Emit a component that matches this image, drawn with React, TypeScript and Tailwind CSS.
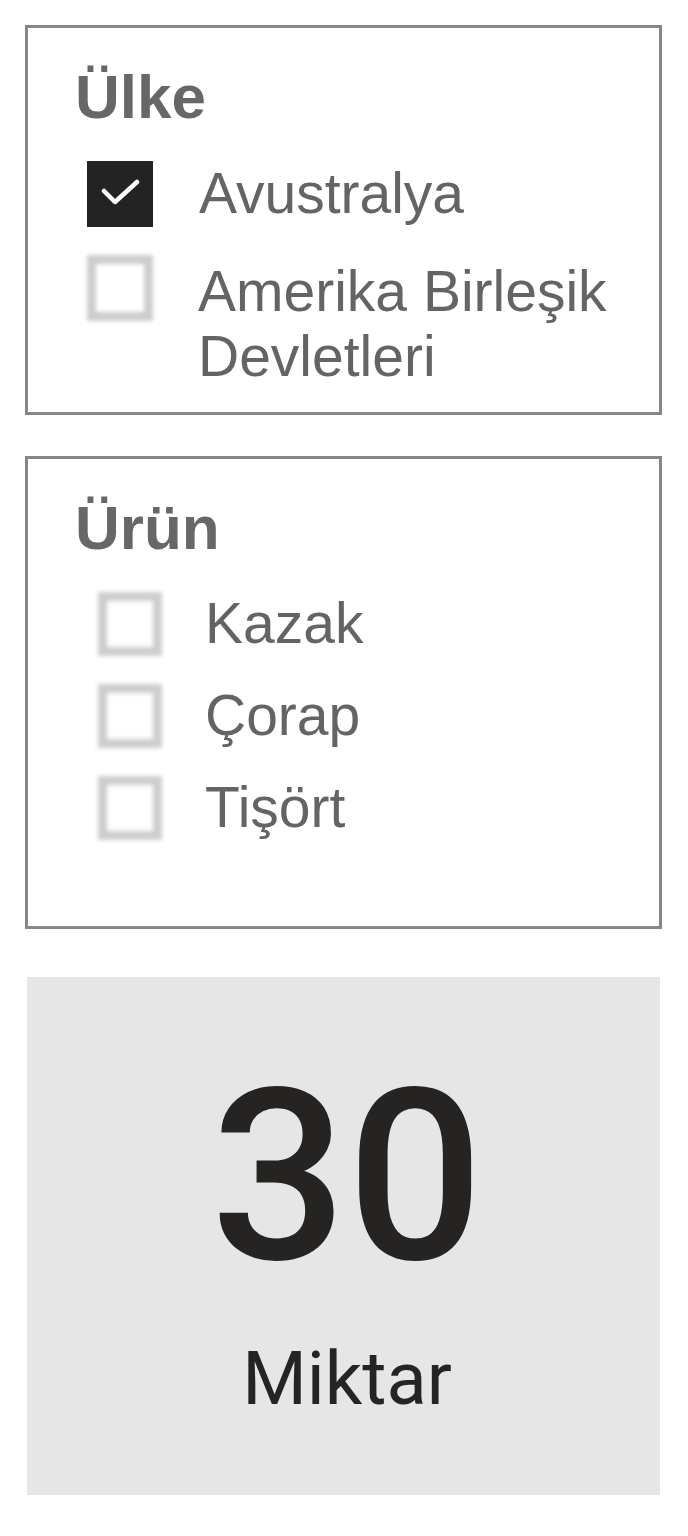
import React from "react";

function Checked({ size }: { size: number }) {
  return (
    <div
      className="shrink-0 bg-[#232323]"
      style={{ width: size, height: size }}
    >
      <svg viewBox="0 0 66 66" width={size} height={size} className="blur-[0.6px]">
        <polyline
          points="17,30 28,41 50,21"
          fill="none"
          stroke="#ffffff"
          strokeWidth="4.5"
          strokeLinecap="round"
          strokeLinejoin="round"
        />
      </svg>
    </div>
  );
}

function Unchecked({ size }: { size: number }) {
  return (
    <div
      className="shrink-0 border-[9px] border-[#cdcdcd] bg-white blur-[2px]"
      style={{ width: size, height: size }}
    />
  );
}

export default function App() {
  const label = "text-[57px] leading-[65px] text-[#646464]";
  const heading = "text-[62px] leading-[70px] font-bold text-[#676767]";
  return (
    <div
      className="w-[688px] min-h-[1536px] bg-white pt-[25px] pl-[25px]"
      style={{ fontFamily: '"Liberation Sans", Arial, sans-serif' }}
    >
      {/* Ülke */}
      <div className="w-[637px] h-[390px] border-[3px] border-[#878787] pt-[34px]">
        <div className={`${heading} ml-[47px]`}>Ülke</div>
        <div className="ml-[59px] mt-[29px] flex items-start">
          <Checked size={66} />
          <div className={`${label} ml-[46px]`}>Avustralya</div>
        </div>
        <div className="ml-[59px] mt-[28px] flex items-start">
          <Unchecked size={66} />
          <div className={`${label} ml-[45px] mt-[4px] pr-[10px]`}>
            Amerika Birleşik Devletleri
          </div>
        </div>
      </div>

      {/* Ürün */}
      <div className="mt-[41px] w-[637px] h-[473px] border-[3px] border-[#878787] pt-[34px]">
        <div className={`${heading} ml-[47px]`}>Ürün</div>
        <div className="ml-[70px] mt-[28px] flex flex-col gap-[27px]">
          {["Kazak", "Çorap", "Tişört"].map((t) => (
            <div key={t} className="flex items-start">
              <div className="mt-[1px]">
                <Unchecked size={64} />
              </div>
              <div className={`${label} ml-[43px]`}>{t}</div>
            </div>
          ))}
        </div>
      </div>

      {/* Card */}
      <div
        className="mt-[48px] ml-[2px] w-[633px] h-[518px] bg-[#e6e6e6] pt-[80px] pl-[7px] flex flex-col items-center"
        style={{ fontFamily: 'Roboto, "Liberation Sans", sans-serif' }}
      >
        <div className="text-[240px] leading-[240px] font-medium text-[#252423]">30</div>
        <div className="mt-[45px] text-[74px] leading-[74px] text-[#252423]">
          Miktar
        </div>
      </div>
    </div>
  );
}
